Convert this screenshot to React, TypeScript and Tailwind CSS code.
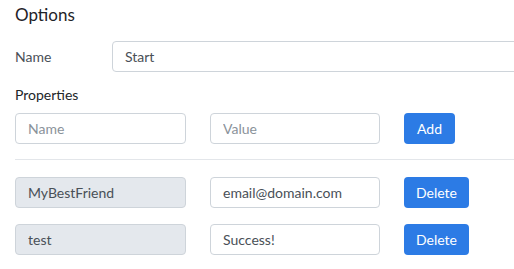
import React from "react";

const inputCls =
  "h-[31px] shrink-0 rounded-[4px] border border-[#ced4da] bg-white px-3 text-[14px] text-[#495057] outline-none placeholder:text-[#8a929a]";

export default function App() {
  return (
    <div
      className="w-[514px] h-[269px] overflow-hidden bg-white pl-[15px] text-[#212529]"
      style={{ fontFamily: 'Lato, sans-serif' }}
    >
      <div className="pt-[3px] text-[17px] leading-[24px] text-[#1f2328]">Options</div>
      <div className="mt-[14px] flex items-center">
        <div className="w-[97px] shrink-0 text-[14px] text-[#495057]">Name</div>
        <input className={inputCls + " w-[420px]"} defaultValue="Start" />
      </div>
      <div className="mt-[13px] text-[14px] leading-[20px] text-[#212529]">Properties</div>
      <div className="mt-[8px] flex items-center gap-[24px]">
        <input className={inputCls + " w-[171px]"} placeholder="Name" />
        <input className={inputCls + " w-[170px]"} placeholder="Value" />
        <button className="h-[31px] w-[51px] shrink-0 rounded-[4px] bg-[#2c7be5] text-[14px] text-white">
          Add
        </button>
      </div>
      <div className="mt-[15px] h-px bg-[#e3e6ea]" />
      <div className="mt-[17px] flex flex-col gap-[16px]">
        {[
          ["MyBestFriend", "email@domain.com"],
          ["test", "Success!"],
        ].map(([k, v]) => (
          <div key={k} className="flex items-center gap-[24px]">
            <input
              className={inputCls + " w-[171px] bg-[#e4e8ed] disabled:bg-[#e4e8ed]"}
              defaultValue={k}
              disabled
            />
            <input className={inputCls + " w-[170px]"} defaultValue={v} />
            <button className="h-[31px] w-[65px] shrink-0 rounded-[4px] bg-[#2c7be5] text-[14px] text-white">
              Delete
            </button>
          </div>
        ))}
      </div>
    </div>
  );
}
